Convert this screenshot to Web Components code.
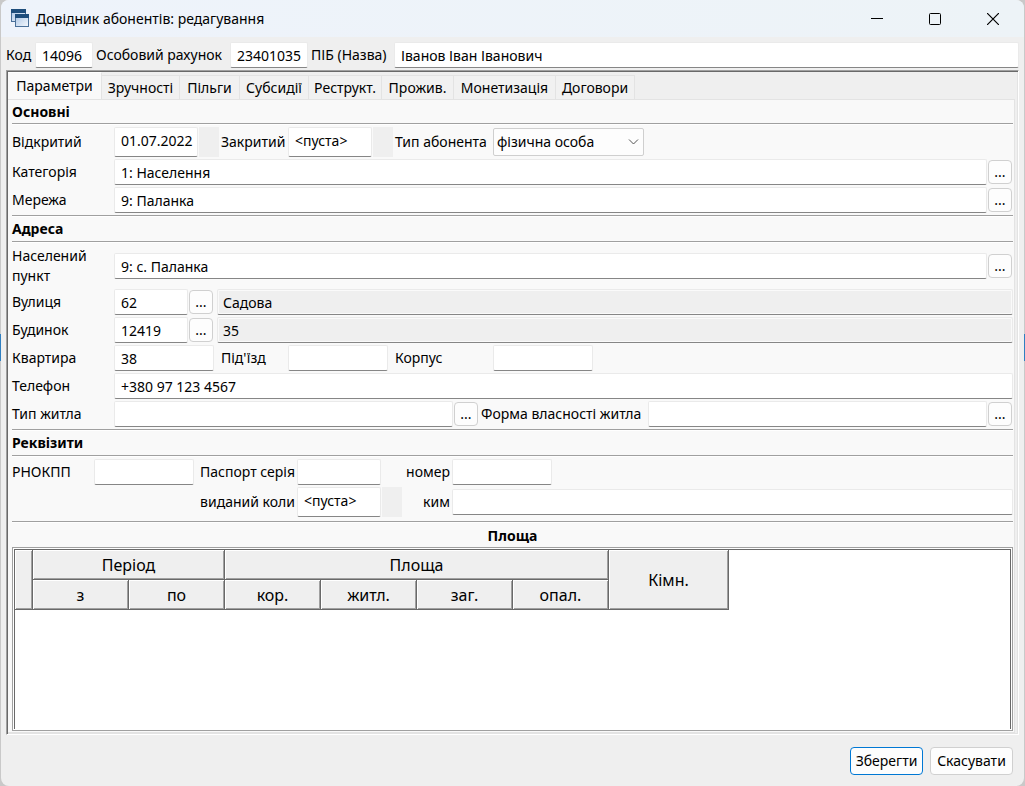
<!DOCTYPE html>
<html lang="uk">
<head>
<meta charset="utf-8">
<meta name="viewport" content="width=device-width, initial-scale=1">
<title>Довідник абонентів: редагування</title>
<style>
  body {
    margin: 0;
    background: linear-gradient(#c9c9c9 334px, #2f7fc1 334px, #2f7fc1 361px, #c9c9c9 361px);
    font: 14px/20px "Noto Sans", "Open Sans", sans-serif;
    color: #000;
  }
</style>
</head>
<body>
<app-window caption="Довідник абонентів: редагування">
  <form-row slot="header" style="--gap: 3px">
    <form-field label="Код" value="14096" style="--label: 29px; --input: 58px"></form-field>
    <form-field label="Особовий рахунок" value="23401035" style="--label: 134px; --input: 78px"></form-field>
    <form-field label="ПІБ (Назва)" value="Іванов Іван Іванович" style="--label: 83px" wide></form-field>
  </form-row>

  <tab-frame>
    <form-section heading="Основні" first>
      <form-row style="--gap: 2px">
        <form-field label="Відкритий" value="01.07.2022" kind="date" style="--label: 102px; --input: 84px"></form-field>
        <form-field label="Закритий" value="&lt;пуста&gt;" kind="date" style="--label: 67px; --input: 84px"></form-field>
        <choice-field label="Тип абонента" options="фізична особа|юридична особа"></choice-field>
      </form-row>
      <form-field label="Категорія" value="1: Населення" style="--label: 102px" wide browse></form-field>
      <form-field label="Мережа" value="9: Паланка" style="--label: 102px" wide browse></form-field>
    </form-section>

    <form-section heading="Адреса">
      <form-field label="Населений пункт" value="9: с. Паланка" style="--label: 102px; --row: 42px" wide browse></form-field>
      <form-row style="--gap: 4px">
        <form-field label="Вулиця" value="62" style="--label: 102px; --input: 74px" browse></form-field>
        <form-field name="Назва вулиці" value="Садова" readonly wide></form-field>
      </form-row>
      <form-row style="--gap: 4px">
        <form-field label="Будинок" value="12419" style="--label: 102px; --input: 74px" browse></form-field>
        <form-field name="Номер будинку" value="35" readonly wide></form-field>
      </form-row>
      <form-row style="--gap: 7px">
        <form-field label="Квартира" value="38" style="--label: 102px; --input: 100px"></form-field>
        <form-field label="Під'їзд" style="--label: 67px; --input: 100px"></form-field>
        <form-field label="Корпус" style="--label: 98px; --input: 100px"></form-field>
      </form-row>
      <form-field label="Телефон" value="+380 97 123 4567" style="--label: 102px" wide></form-field>
      <form-row style="--gap: 2px">
        <form-field label="Тип житла" style="--label: 102px" wide browse></form-field>
        <form-field label="Форма власності житла" style="--label: 167px" wide browse></form-field>
      </form-row>
    </form-section>

    <form-section heading="Реквізити">
      <form-row style="--gap: 2px">
        <form-field label="РНОКПП" style="--label: 82px; --input: 100px"></form-field>
        <form-field label="Паспорт серія" align="end" style="--label: 101px; --input: 84px"></form-field>
        <form-field label="номер" align="end" style="--label: 69px; --input: 100px"></form-field>
      </form-row>
      <form-row style="--gap: 2px">
        <form-field label="виданий коли" value="&lt;пуста&gt;" kind="date" align="end" style="--label: 285px; --input: 84px"></form-field>
        <form-field label="ким" align="end" style="--label: 48px" wide></form-field>
      </form-row>
    </form-section>

    <area-grid heading="Площа"></area-grid>
  </tab-frame>

  <push-button slot="actions" style="--width: 73px" primary>Зберегти</push-button>
  <push-button slot="actions" style="--width: 83px">Скасувати</push-button>
</app-window>

<script>
  const define = (name, render) => customElements.define(name, class extends HTMLElement {
    constructor() {
      super();
      this.attachShadow({ mode: 'open' });
    }
    connectedCallback() {
      this.shadowRoot.innerHTML = '<style>*{box-sizing:border-box}</style>' + render(this);
    }
  });

  const esc = (text) => (text || '').replace(/[&<>"]/g, (c) => `&#${c.charCodeAt(0)};`);

  define('app-window', (el) => `
    <style>
      :host { display: flex; flex-direction: column; min-height: 100vh; margin: 0 1px; border-radius: 8px; background: #efefef; overflow: hidden; box-sizing: border-box; }
      header { display: flex; align-items: center; height: 37px; padding: 0 2px 0 10px; background: linear-gradient(90deg, #eef3fb, #edf3f7); }
      header svg { flex: none; }
      h1 { flex: 1; margin: 0 0 0 6px; font-size: 14px; line-height: 20px; font-weight: 400; }
      header button { width: 58px; height: 36px; padding: 0; border: 0; background: none; display: grid; place-items: center; }
      .fields { padding: 5px 5px 2px; }
      main { flex: 1; display: flex; flex-direction: column; padding: 0 5px; }
      footer { display: flex; justify-content: flex-end; gap: 7px; padding: 12px 11px 11px; }
    </style>
    <header>
      <svg width="19" height="19" viewBox="0 0 19 19" aria-hidden="true">
        <defs><linearGradient id="pane" x2="1" y2="1"><stop stop-color="#a9c4e4"/><stop offset="1" stop-color="#f4f8fd"/></linearGradient></defs>
        <rect x=".5" y=".5" width="14" height="12" fill="url(#pane)" stroke="#4a7099"/>
        <rect x="0" y="0" width="15" height="4" fill="#1f4e7c"/>
        <rect x="4.500" y="5.500" width="13" height="12" fill="url(#pane)" stroke="#4a7099"/>
        <rect x="4" y="5" width="14" height="4" fill="#1f4e7c"/>
      </svg>
      <h1>${esc(el.getAttribute('caption'))}</h1>
      <button aria-label="Згорнути"><svg width="12" height="12"><path d="M0 5.500H12" stroke="#000"/></svg></button>
      <button aria-label="Розгорнути"><svg width="12" height="12"><rect x=".5" y=".5" width="11" height="11" rx="1" fill="none" stroke="#000"/></svg></button>
      <button aria-label="Закрити"><svg width="12" height="12"><path d="M0 0L12 12M12 0L0 12" stroke="#000" stroke-width="1.200"/></svg></button>
    </header>
    <div class="fields"><slot name="header"></slot></div>
    <main><slot></slot></main>
    <footer><slot name="actions"></slot></footer>`);

  define('form-row', () => `
    <style>:host { display: flex; align-items: center; gap: var(--gap); }</style>
    <slot></slot>`);

  define('form-field', (el) => {
    const label = el.getAttribute('label');
    const date = el.getAttribute('kind') === 'date';
    const name = esc(label || el.getAttribute('name'));
    return `
    <style>
      :host { display: flex; align-items: center; min-height: var(--row, 26px); }
      :host([wide]) { flex: 1 1 auto; min-width: 0; }
      label { flex: none; width: var(--label); }
      :host([align=end]) label { text-align: right; padding-right: 2px; }
      input { flex: none; width: var(--input); height: 26px; margin: 0; padding: 0 5px 0 6px; border: 1px solid #eaeaea; border-bottom-color: #868686; border-radius: 2px; background: #fff; color: inherit; font: inherit; outline: 0; }
      :host([wide]) input { flex: 1 1 0; width: 0; }
      input[readonly] { background: #efefef; box-shadow: inset 0 0 0 1px #fafafa; padding-left: 5px; }
      input.date { height: 30px; padding: 0 3px 4px 6px; }
      .stub { width: 20px; height: 30px; margin-left: 1px; background: #efefef; }
      button { flex: none; width: 24px; height: 24px; margin-left: 1px; padding: 0; border: 1px solid #d0d0d0; border-radius: 4px; background: #fdfdfd; color: inherit; font: inherit; }
      :host([wide]) button { margin-right: 1px; }
    </style>
    ${label ? `<label for="field">${name}</label>` : ''}
    <input id="field" class="${date ? 'date' : ''}" value="${esc(el.getAttribute('value'))}" ${label ? '' : `aria-label="${name}"`} ${el.hasAttribute('readonly') ? 'readonly' : ''}>
    ${date ? '<span class="stub"></span>' : ''}
    ${el.hasAttribute('browse') ? '<button type="button">...</button>' : ''}`;
  });

  define('choice-field', (el) => `
    <style>
      :host { display: flex; align-items: center; }
      label { width: 98px; white-space: nowrap; }
      .box { display: grid; align-items: center; }
      select { grid-area: 1 / 1; appearance: none; width: 151px; height: 28px; padding: 0 24px 0 3px; border: 1px solid #cfcfcf; border-radius: 2px; background: #fdfdfd; color: inherit; font: inherit; }
      svg { grid-area: 1 / 1; justify-self: end; margin-right: 5px; pointer-events: none; }
    </style>
    <label for="choice">${esc(el.getAttribute('label'))}</label>
    <span class="box">
      <select id="choice">${el.getAttribute('options').split('|').map((o) => `<option>${esc(o)}</option>`).join('')}</select>
      <svg width="11" height="6"><path d="M1 .5L5.500 5L10 .5" fill="none" stroke="#555"/></svg>
    </span>`);

  define('tab-frame', () => {
    const tabs = [['Параметри', 94], ['Зручності', 78], ['Пільги', 60], ['Субсидії', 69], ['Реструкт.', 73], ['Прожив.', 72], ['Монетизація', 102], ['Договори', 79]];
    return `
    <style>
      :host { flex: 1; display: flex; flex-direction: column; padding: 1px; border: 1px solid; border-color: #a0a0a0 #fff #fff #a0a0a0; box-shadow: inset 1px 1px #696969, inset -1px -1px #e3e3e3; }
      nav { display: flex; align-items: flex-end; height: 27px; }
      button { flex: none; height: 24px; padding: 0; border: 1px solid #e3e3e3; border-width: 1px 1px 0 0; background: #f1f1f1; color: inherit; font: inherit; white-space: nowrap; }
      button[aria-selected=true] { height: 27px; padding-bottom: 1px; background: #f9f9f9; border-color: #fff #e3e3e3; }
      .page { flex: 1; display: flex; flex-direction: column; margin-right: 2px; padding: 0 1px 1px 4px; border: 1px solid #e3e3e3; border-left: 0; background: #f9f9f9; }
    </style>
    <nav role="tablist">${tabs.map(([t, w], i) => `<button role="tab" aria-selected="${i === 0}" style="width:${w}px">${t}</button>`).join('')}</nav>
    <div class="page" role="tabpanel"><slot></slot></div>`;
  });

  define('form-section', (el) => `
    <style>
      :host { display: block; }
      h2 { margin: 0 0 1px; padding: 3px 0 2px; font-size: 14px; line-height: 20px; font-weight: 700; border-top: 1px solid #a0a0a0; border-bottom: 1px solid #a0a0a0; box-shadow: inset 0 1px #fff, 0 1px #fff; }
      :host([first]) h2 { border-top: 0; box-shadow: 0 1px #fff; padding: 2px 0 1px; }
      div { display: flex; flex-direction: column; gap: 2px; padding: 2px 0; }
    </style>
    <h2>${esc(el.getAttribute('heading'))}</h2>
    <div><slot></slot></div>`);

  define('area-grid', (el) => `
    <style>
      :host { flex: 1; display: flex; flex-direction: column; margin-top: 2px; border-top: 1px solid #a0a0a0; box-shadow: inset 0 1px #fff; }
      h2 { margin: 0; padding: 4px 0 1px; font-size: 14px; line-height: 20px; font-weight: 700; text-align: center; }
      .outer { flex: 1; display: flex; padding: 1px; border: 1px solid #a0a0a0; background: #fff; }
      .inner { flex: 1; min-height: 120px; border: 1px solid #696969; border-bottom: 0; }
      table { width: 714px; table-layout: fixed; border-spacing: 0; font-size: 16px; line-height: 20px; }
      th { height: 30px; padding: 0; font-weight: 400; background: #efefef; border: 1px solid #696969; border-width: 0 1px 1px 0; box-shadow: inset 1px 1px #fff, inset -1px -1px #a0a0a0; }
      .mark { width: 18px; }
      .rooms { width: 120px; }
    </style>
    <h2>${esc(el.getAttribute('heading'))}</h2>
    <div class="outer"><div class="inner">
      <table>
        <colgroup><col class="mark"><col span="6"><col class="rooms"></colgroup>
        <thead>
          <tr><th rowspan="2"></th><th colspan="2">Період</th><th colspan="4">Площа</th><th rowspan="2">Кімн.</th></tr>
          <tr><th>з</th><th>по</th><th>кор.</th><th>житл.</th><th>заг.</th><th>опал.</th></tr>
        </thead>
      </table>
    </div></div>`);

  define('push-button', () => `
    <style>
      :host { display: block; }
      button { min-width: var(--width); height: 28px; padding: 0 4px; border: 1px solid #d0d0d0; border-radius: 4px; background: #fdfdfd; color: inherit; font: inherit; }
      :host([primary]) button { border-color: #0078d4; }
    </style>
    <button type="button"><slot></slot></button>`);
</script>
</body>
</html>
